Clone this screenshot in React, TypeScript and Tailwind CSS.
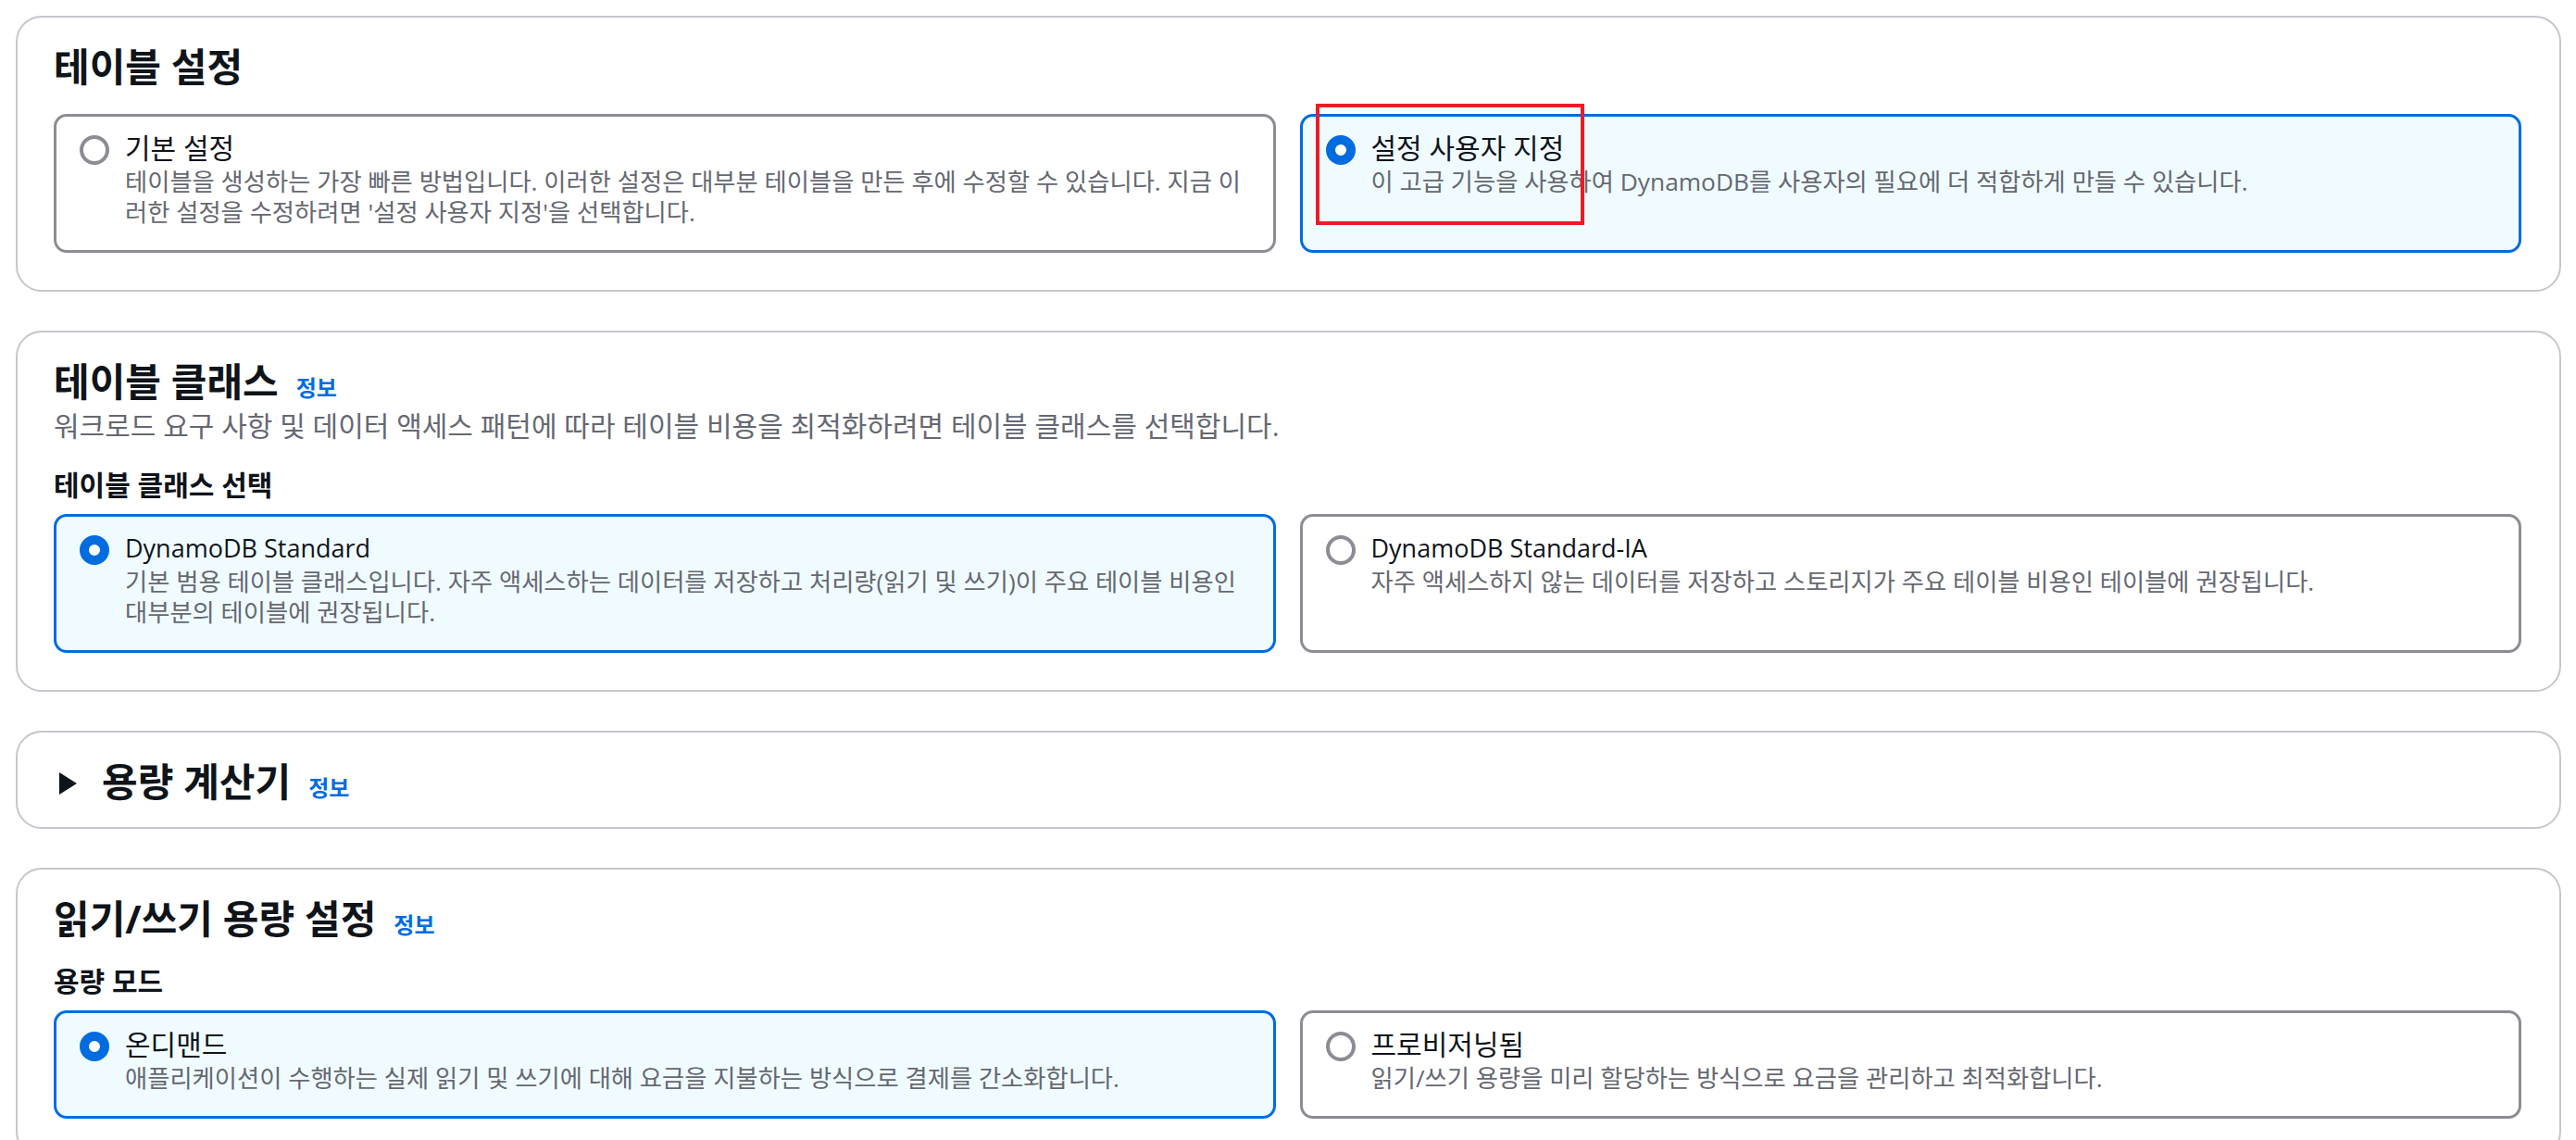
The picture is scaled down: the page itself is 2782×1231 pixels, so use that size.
import type { ReactNode } from 'react'

type Option = {
  id: string
  label: string
  description: string
}

function InfoLink() {
  return (
    <a href="#" className="text-[24px] font-bold text-[#006ce0] no-underline">
      정보
    </a>
  )
}

function Container({
  children,
  className = '',
}: {
  children: ReactNode
  className?: string
}) {
  return (
    <section
      className={`rounded-[28px] border-2 border-[#c6c6cd] bg-white pl-[39px] pr-[41px] pt-[28px] ${className}`}
    >
      {children}
    </section>
  )
}

function Heading({ title, info = false }: { title: string; info?: boolean }) {
  return (
    <div className="flex items-baseline gap-[19px]">
      <h2 className="text-[42px] font-bold leading-[50px] text-[#0f141a]">{title}</h2>
      {info && <InfoLink />}
    </div>
  )
}

function Radio({ checked }: { checked: boolean }) {
  return checked ? (
    <span className="mt-[6px] block h-[32px] w-[32px] shrink-0 rounded-full border-[10px] border-[#006ce0] bg-white" />
  ) : (
    <span className="mt-[6px] block h-[32px] w-[32px] shrink-0 rounded-full border-4 border-[#8c8c94] bg-white" />
  )
}

function Tile({
  option,
  checked,
  marked = false,
}: {
  option: Option
  checked: boolean
  marked?: boolean
}) {
  // latin labels render wider in Open Sans, keep them a touch smaller
  const latin = /^[A-Za-z]/.test(option.label)
  return (
    <div
      className={`relative flex gap-[17px] rounded-[14px] border-[3px] pb-[24px] pl-[25px] pr-[25px] pt-[14px] ${
        checked ? 'border-[#006ce0] bg-[#f0fbff]' : 'border-[#8c8c94] bg-white'
      }`}
    >
      <Radio checked={checked} />
      <div className="min-w-0 flex-1">
        <div className={`${latin ? 'text-[27px]' : 'text-[30px]'} leading-[40px] text-[#0f141a]`}>
          {option.label}
        </div>
        <p className="text-[26.3px] leading-[33px] text-[#656871]">{option.description}</p>
      </div>
      {/* annotation box drawn over the selected option */}
      {marked && (
        <div className="pointer-events-none absolute left-[14px] top-[-14px] h-[131px] w-[290px] border-4 border-[#ed1c24]" />
      )}
    </div>
  )
}

function TileGroup({
  options,
  selected,
  markedId,
  className = '',
}: {
  options: Option[]
  selected: string
  markedId?: string
  className?: string
}) {
  return (
    <div className={`grid grid-cols-2 gap-[26px] ${className}`}>
      {options.map((o) => (
        <Tile key={o.id} option={o} checked={o.id === selected} marked={o.id === markedId} />
      ))}
    </div>
  )
}

const settingsOptions: Option[] = [
  {
    id: 'default',
    label: '기본 설정',
    description:
      "테이블을 생성하는 가장 빠른 방법입니다. 이러한 설정은 대부분 테이블을 만든 후에 수정할 수 있습니다. 지금 이러한 설정을 수정하려면 '설정 사용자 지정'을 선택합니다.",
  },
  {
    id: 'custom',
    label: '설정 사용자 지정',
    description: '이 고급 기능을 사용하여 DynamoDB를 사용자의 필요에 더 적합하게 만들 수 있습니다.',
  },
]

const classOptions: Option[] = [
  {
    id: 'standard',
    label: 'DynamoDB Standard',
    description:
      '기본 범용 테이블 클래스입니다. 자주 액세스하는 데이터를 저장하고 처리량(읽기 및 쓰기)이 주요 테이블 비용인 대부분의 테이블에 권장됩니다.',
  },
  {
    id: 'standard-ia',
    label: 'DynamoDB Standard-IA',
    description: '자주 액세스하지 않는 데이터를 저장하고 스토리지가 주요 테이블 비용인 테이블에 권장됩니다.',
  },
]

const capacityOptions: Option[] = [
  {
    id: 'on-demand',
    label: '온디맨드',
    description: '애플리케이션이 수행하는 실제 읽기 및 쓰기에 대해 요금을 지불하는 방식으로 결제를 간소화합니다.',
  },
  {
    id: 'provisioned',
    label: '프로비저닝됨',
    description: '읽기/쓰기 용량을 미리 할당하는 방식으로 요금을 관리하고 최적화합니다.',
  },
]

export default function App() {
  return (
    <div className="flex min-h-screen flex-col gap-[42px] bg-white pl-[17px] pr-[16px] pt-[17px] font-['Open_Sans','Noto_Sans_CJK_KR',sans-serif]">
      {/* Table settings */}
      <Container className="pb-[40px]">
        <Heading title="테이블 설정" />
        <TileGroup className="mt-[26px]" options={settingsOptions} selected="custom" markedId="custom" />
      </Container>

      {/* Table class */}
      <Container className="pb-[40px]">
        <Heading title="테이블 클래스" info />
        <p className="mt-[3px] text-[30px] leading-[40px] text-[#656871]">
          워크로드 요구 사항 및 데이터 액세스 패턴에 따라 테이블 비용을 최적화하려면 테이블 클래스를 선택합니다.
        </p>
        <div className="mt-[24px] text-[30px] font-bold leading-[40px] text-[#0f141a]">테이블 클래스 선택</div>
        <TileGroup className="mt-[11px]" options={classOptions} selected="standard" />
      </Container>

      {/* Capacity calculator (collapsed) */}
      <Container className="pb-[24px]">
        <div className="flex items-center">
          <svg className="mr-[27px] mt-[4px] shrink-0" width="25" height="24" viewBox="0 0 25 24">
            <polygon points="6,0 25,12 6,24" fill="#0f141a" />
          </svg>
          <Heading title="용량 계산기" info />
        </div>
      </Container>

      {/* Read/write capacity */}
      <Container className="pb-[40px]">
        <Heading title="읽기/쓰기 용량 설정" info />
        <div className="mt-[23px] text-[30px] font-bold leading-[40px] text-[#0f141a]">용량 모드</div>
        <TileGroup className="mt-[11px]" options={capacityOptions} selected="on-demand" />
      </Container>
    </div>
  )
}
